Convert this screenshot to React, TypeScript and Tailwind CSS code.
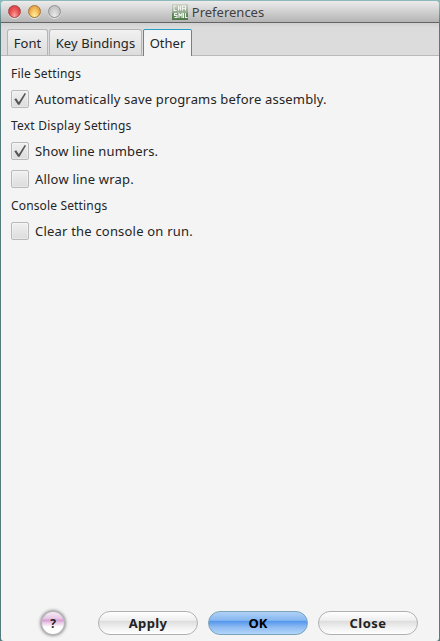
import React from "react";

function Light({ color }: { color: string }) {
  return (
    <span
      className={`h-[13px] w-[13px] rounded-full border shadow-[0_1px_0_rgba(255,255,255,0.6)] ${color}`}
    />
  );
}

function AppIcon() {
  return (
    <svg className="mr-[4px] h-[16px] w-[16px]" viewBox="0 0 16 16">
      <defs>
        <linearGradient id="leaf" x1="0" y1="0" x2="0" y2="1">
          <stop offset="0" stopColor="#cdd4c9" />
          <stop offset="0.5" stopColor="#93aa8e" />
          <stop offset="1" stopColor="#4a7345" />
        </linearGradient>
      </defs>
      <rect width="16" height="16" fill="url(#leaf)" />
      <path d="M0 9h3v5H0zM12 9h4v5h-4z" fill="#4f8149" opacity="0.6" />
      <path
        d="M4.500 2H2v4.500h2.500M6.500 1.500v5M8.500 1.500v5M6.500 4h2M10.500 6.500V2h3v4.500M10.500 4.500h3M5 9.500H2.500v2H5v2H2.500M7 14V9.500l1.500 2 1.500-2V14M11.500 9v5M13.500 9v4.500h2"
        fill="none"
        stroke="#f5f7f3"
        strokeWidth="1.1"
        opacity="0.95"
      />
    </svg>
  );
}

function Heading({ children, track }: { children: React.ReactNode; track: string }) {
  return <div className={`flex h-[24px] items-center pt-[2px] text-[12px] ${track}`}>{children}</div>;
}

function Check({ label, on, track }: { label: string; on?: boolean; track: string }) {
  return (
    <div className="flex h-[28px] items-center gap-[6px]">
      <span className="h-[18px] w-[18px] shrink-0 rounded-[2px] border border-[#b9b9b9] bg-linear-to-b from-[#f0f0f0] to-[#dcdcdc] shadow-[inset_0_0_0_1px_rgba(255,255,255,0.35)]">
        {on && (
          <svg className="block h-[16px] w-[16px]" viewBox="0 0 16 16">
            <path d="M2.300 8.300 4.200 7.200 6.800 11.200 12.700 2 14 2.800 7.500 13.700H6Z" fill="#555" />
          </svg>
        )}
      </span>
      <span className={`pt-[2px] text-[13px] ${track}`}>{label}</span>
    </div>
  );
}

function Pill({ label, primary, track }: { label: string; primary?: boolean; track: string }) {
  return (
    <button
      className={`flex h-[24px] w-[100px] items-center justify-center rounded-full border text-[13px] leading-none font-bold ${track} ${
        primary
          ? "border-[#7ba4b8] bg-[linear-gradient(to_bottom,#b1d1f6_0%,#86b6f1_38%,#5396ec_42%,#8dbaf3_68%,#b3d5fa_100%)] text-black"
          : "border-[#b0b0b0] bg-[linear-gradient(to_bottom,#ffffff_0%,#eeeeee_38%,#dddddd_42%,#efefef_68%,#ffffff_100%)] text-[#222]"
      }`}
    >
      {label}
    </button>
  );
}

export default function App() {
  return (
    <div className="h-[641px] w-[440px] overflow-hidden bg-[linear-gradient(to_bottom,#8cbabb_0,#8cbabb_3px,#557b7d_24px)] pt-px pr-px pl-px font-['Noto_Sans',sans-serif] text-[#252525]">
      <div className="flex h-[640px] flex-col overflow-hidden rounded-t-[4px] rounded-b-[3px] bg-[#f4f4f4]">
        <header className="grid h-[22px] shrink-0 grid-cols-[1fr_auto_1fr] items-center border-b border-[#646464] bg-linear-to-b from-[#ececec] to-[#b5b5b5]">
          <div className="flex gap-[7px] pl-[7px]">
            <Light color="border-[#a84a4a] bg-[radial-gradient(ellipse_at_50%_95%,#ffaaa5_0%,#ed5f60_45%,#d63c42_80%)]" />
            <Light color="border-[#a47737] bg-[radial-gradient(ellipse_at_50%_95%,#fff3a0_0%,#f7c366_45%,#e29a3d_80%)]" />
            <Light color="border-[#929292] bg-[radial-gradient(ellipse_at_50%_95%,#eeeeee_0%,#cfcfcf_50%,#b9b9b9_85%)]" />
          </div>
          <div className="mr-[4px] flex items-center pt-px text-[13px] leading-[16px] text-[#404040]">
            <AppIcon />
            Preferences
          </div>
        </header>
        <nav className="flex h-[33px] shrink-0 items-end border-b border-[#b9b9b9] bg-[linear-gradient(to_bottom,#d0d0d0_0,#dcdcdc_5px)] pl-[6px] text-[13px]">
          <div className="flex h-[26px] w-[41px] items-center justify-center rounded-t-[3px] border border-b-0 border-[#b5b5b5] bg-linear-to-b from-[#f1f1f1] to-[#dddddd] pt-[2px]">
            Font
          </div>
          <div className="ml-px flex h-[26px] w-[93px] items-center justify-center rounded-t-[3px] border border-b-0 border-[#b5b5b5] bg-linear-to-b from-[#f1f1f1] to-[#dddddd] pt-[2px] tracking-[0.080px]">
            Key Bindings
          </div>
          <div className="ml-px -mb-px h-[27px] w-[49px] rounded-t-[2px] bg-[#249ec4] px-px pt-px">
            <div className="flex h-[26px] items-center justify-center rounded-t-[1px] bg-[#f4f4f4] pt-px">
              Other
            </div>
          </div>
        </nav>
        <main className="flex-1 pt-[5px] pl-[10px]">
          <Heading track="tracking-[0.160px]">File Settings</Heading>
          <Check on track="tracking-[0.170px]" label="Automatically save programs before assembly." />
          <Heading track="tracking-[0.220px]">Text Display Settings</Heading>
          <Check on track="tracking-[0.150px]" label="Show line numbers." />
          <Check track="tracking-[0.200px]" label="Allow line wrap." />
          <Heading track="tracking-[0.150px]">Console Settings</Heading>
          <Check track="tracking-[0.200px]" label="Clear the console on run." />
        </main>
        <footer className="flex h-[36px] shrink-0 items-center gap-[10px] pl-[39px]">
          <button className="mr-[22px] flex h-[26px] w-[26px] items-center justify-center rounded-full border-2 border-[#b5b5b5] bg-[linear-gradient(to_bottom,#f7edf6_0%,#e9c8e6_28%,#d5a1d3_38%,#e9cce7_50%,#ffffff_68%)] pt-px text-[12px] leading-none font-bold shadow-[0_0_3px_#999]">
            ?
          </button>
          <Pill label="Apply" track="tracking-[0.400px]" />
          <Pill primary label="OK" track="tracking-normal" />
          <Pill label="Close" track="tracking-[0.500px]" />
        </footer>
      </div>
    </div>
  );
}
